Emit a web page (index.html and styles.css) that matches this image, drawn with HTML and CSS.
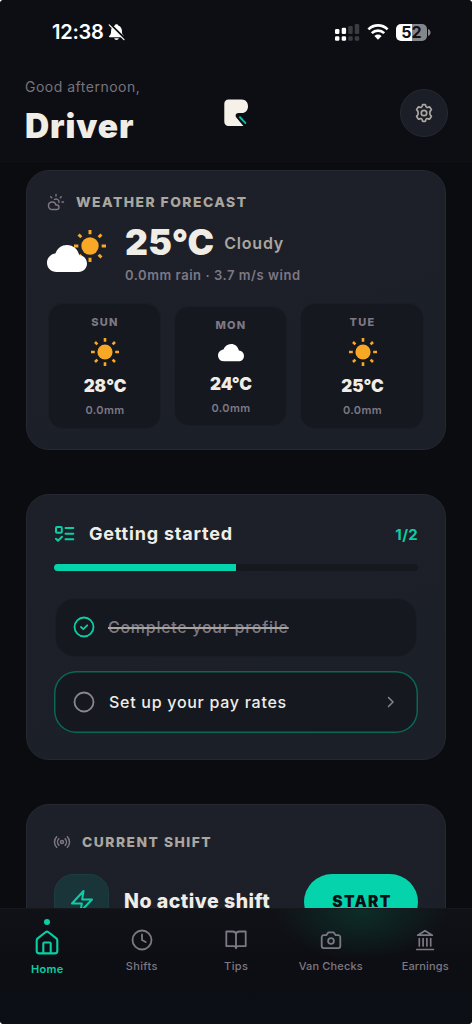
FILE: index.html
```html
<!DOCTYPE html>
<html lang="en">
<head>
<meta charset="utf-8">
<title>Home</title>
<link rel="stylesheet" href="styles.css">
</head>
<body>
<svg class="defs" width="0" height="0">
  <defs>
    <symbol id="sun" viewBox="0 0 28 28">
      <circle cx="14" cy="14" r="7.6" fill="#f9a825"/>
      <g stroke="#f9a825" stroke-width="2.6">
        <path d="M14 0v3.8M14 24.2V28M0 14h3.8M24.2 14H28M4 4l2.4 2.4M21.6 21.6L24 24M4 24l2.4-2.4M21.6 6.4L24 4"/>
      </g>
    </symbol>
    <symbol id="cloud" viewBox="0 0 40 27">
      <path d="M9.5 27C4 27 0 23 0 17.8 0 12.8 3.6 9.2 8.3 8.6 10.4 3.4 14.6 0 20 0c6.200 0 10.900 4.200 12.200 10.200C36.800 10.600 40 14 40 18.500 40 23.300 36.400 27 31.600 27z" fill="#fff"/>
    </symbol>
  </defs>
</svg>
<div class="screen">
  <div class="status">
    <span class="clock">12:38</span>
    <svg class="bell" width="18" height="18" viewBox="0 0 18 18">
      <path d="M8.500 1.200c.9 0 1.500.5 1.700 1.300 2.400.7 3.700 2.700 3.700 5.200 0 3 .6 3.900 1.700 5 .7.700.4 1.600-.6 1.600H2c-1 0-1.300-.9-.6-1.600 1.100-1.100 1.700-2 1.700-5 0-2.500 1.300-4.500 3.700-5.200.2-.8.8-1.300 1.700-1.300zM6.200 15.300h4.600c-.3 1-1.200 1.700-2.300 1.700s-2-.7-2.300-1.700z" fill="#fff"/>
      <path d="M2.300 1.200L17 15.900" stroke="#0d0e13" stroke-width="2.200"/>
      <path d="M1.200 1.900L16 16.700" stroke="#fff" stroke-width="1.200" stroke-linecap="round"/>
    </svg>
    <svg class="signal" width="25" height="17" viewBox="0 0 25 17">
      <g fill="#fff"><rect x="0" y="5" width="4.400" height="5" rx="1.300"/><rect x="6.700" y="3.700" width="4.400" height="6.300" rx="1.300"/><rect x="0" y="12.300" width="4.400" height="4.400" rx="1.300"/><rect x="6.700" y="12.300" width="4.400" height="4.400" rx="1.300"/></g>
      <g fill="#3b3c40"><rect x="13.300" y="2" width="4.400" height="8" rx="1.300"/><rect x="19.800" y="0" width="4.400" height="10" rx="1.300"/><rect x="13.300" y="12.300" width="4.400" height="4.400" rx="1.300"/><rect x="19.800" y="12.300" width="4.400" height="4.400" rx="1.300"/></g>
    </svg>
    <svg class="wifi" width="22" height="16" viewBox="0 0 22 16">
      <g fill="none" stroke="#fff" stroke-width="2.700"><path d="M1.400 5.400a13.700 13.700 0 0 1 19.200 0"/><path d="M4.800 9.100a8.900 8.900 0 0 1 12.400 0"/></g>
      <path d="M7.400 12a5.200 5.200 0 0 1 7.200 0L11 15.700z" fill="#fff"/>
    </svg>
    <div class="battery"><span>52</span></div>
    <svg class="nub" width="3" height="7" viewBox="0 0 3 7"><path d="M0 0c1.500.4 2.500 1.800 2.500 3.500S1.500 6.600 0 7z" fill="#85868a"/></svg>
  </div>
  <header class="header">
    <div class="greet">
      <div class="hello">Good afternoon,</div>
      <h1 class="name">Driver</h1>
    </div>
    <svg class="logo" width="25" height="28" viewBox="0 0 25 28">
      <path d="M4.500.5h13.300c3.700 0 6.200 2.800 6.200 6.700 0 4-2.500 6.800-6.200 6.800h-3.300c-1.800 0-2.900.9-2.900 2.400 0 .9.200 1.600.9 2.400l6.900 8.200H4.500C2 27 .3 25.300.3 22.800V4.700C.3 2.200 2 .5 4.500.5z" fill="#f5f1e9"/>
      <path d="M16 18.300l5.300 5.600" stroke="#12b8a2" stroke-width="2" stroke-linecap="round"/>
    </svg>
    <div class="settings">
      <svg width="20" height="20" viewBox="0 0 20 22" fill="none" stroke="#aaa69f" stroke-width="1.900" stroke-linejoin="round">
        <path d="M8.600 1.700h2.800c.5 1 .5 2.300 1.300 2.900.9.600 2.200-.2 3.500-.3l1.900 2.900c-.5 1.100-1.600 1.700-1.600 2.800v2c0 1.100 1.100 1.700 1.600 2.800l-1.900 2.900c-1.300-.1-2.600-.9-3.500-.3-.8.600-.8 1.900-1.300 2.900H8.600c-.5-1-.5-2.300-1.300-2.900-.9-.6-2.200.2-3.500.3l-1.900-2.900c.5-1.100 1.600-1.700 1.600-2.800v-2c0-1.100-1.100-1.700-1.600-2.800l1.900-2.900c1.300.1 2.600.9 3.500.3.8-.6.800-1.900 1.300-2.900z"/>
        <circle cx="10" cy="11" r="3"/>
      </svg>
    </div>
  </header>
  <main class="feed">
    <section class="card weather">
      <div class="eyebrow">
        <svg width="18" height="18" viewBox="0 0 24 24" fill="none" stroke="#7d7884" stroke-width="1.900" stroke-linecap="round" stroke-linejoin="round"><path d="M12 2v2M4.930 4.930l1.410 1.410M20 12h2M19.070 4.930l-1.410 1.410M15.947 12.650a4 4 0 0 0-5.925-4.128M13 22H7a5 5 0 1 1 4.900-6H13a3 3 0 0 1 0 6z"/></svg>
        <span>WEATHER FORECAST</span>
      </div>
      <div class="now">
        <svg class="now-art" width="60" height="44" viewBox="0 0 60 44">
          <use href="#sun" x="27" y="0" width="32" height="32"/>
          <use href="#cloud" x="0" y="15" width="40" height="27"/>
        </svg>
        <div>
          <div class="temp-row"><span class="temp">25°C</span><span class="sky">Cloudy</span></div>
          <div class="detail">0.0mm rain · 3.7 m/s wind</div>
        </div>
      </div>
      <div class="days">
        <div class="day"><span class="dow">SUN</span><svg width="28" height="28"><use href="#sun" width="28" height="28"/></svg><span class="deg">28°C</span><span class="mm">0.0mm</span></div>
        <div class="day short"><span class="dow">MON</span><svg width="26" height="28"><use href="#cloud" y="5" width="26" height="17.500"/></svg><span class="deg">24°C</span><span class="mm">0.0mm</span></div>
        <div class="day"><span class="dow">TUE</span><svg width="28" height="28"><use href="#sun" width="28" height="28"/></svg><span class="deg">25°C</span><span class="mm">0.0mm</span></div>
      </div>
    </section>

    <section class="card start">
      <div class="start-head">
        <svg width="22" height="20" viewBox="0 0 22 20" fill="none" stroke="#0acfa6" stroke-width="2" stroke-linecap="round" stroke-linejoin="round"><rect x="2" y="3" width="5.800" height="5.800" rx="1"/><path d="M2 14.700l2 2 4-4M11.500 4h7.800M11.500 9.700h7.800M11.500 15.300h7.800"/></svg>
        <h2>Getting started</h2>
        <span class="count">1/2</span>
      </div>
      <div class="track"><div class="fill"></div></div>
      <div class="task done">
        <svg width="22" height="22" viewBox="0 0 22 22" fill="none" stroke="#0acfa6" stroke-width="1.800" stroke-linecap="round" stroke-linejoin="round"><circle cx="11" cy="11" r="9.500"/><path d="M8 11l2.200 2.200L14.200 9.300"/></svg>
        <span>Complete your profile</span>
      </div>
      <div class="task next">
        <svg width="22" height="22" viewBox="0 0 22 22" fill="none" stroke="#8a8590" stroke-width="1.800"><circle cx="11" cy="11" r="9.500"/></svg>
        <span>Set up your pay rates</span>
        <svg class="chev" width="8" height="12" viewBox="0 0 8 12" fill="none" stroke="#8a8590" stroke-width="1.500" stroke-linecap="round" stroke-linejoin="round"><path d="M1.500 1.500L6 6l-4.500 4.500"/></svg>
      </div>
    </section>

    <section class="card shift">
      <div class="eyebrow wide">
        <svg width="18" height="18" viewBox="0 0 24 24" fill="none" stroke="#7d7884" stroke-width="2" stroke-linecap="round" stroke-linejoin="round"><path d="M4.900 19.100C1 15.200 1 8.800 4.900 4.900M7.800 16.200c-2.300-2.300-2.300-6.100 0-8.500M16.200 7.800c2.300 2.300 2.300 6.100 0 8.500M19.100 4.900C23 8.800 23 15.100 19.100 19"/><circle cx="12" cy="12" r="2"/></svg>
        <span>CURRENT SHIFT</span>
      </div>
      <div class="shift-row">
        <div class="bolt"><svg width="24" height="24" viewBox="0 0 24 24" fill="none" stroke="#0acfa6" stroke-width="2" stroke-linejoin="round"><path d="M13.500 1L2 13.500h9.800l-1.300 8L22 9.500h-9.800z"/></svg></div>
        <span class="no-shift">No active shift</span>
        <div class="go">START</div>
      </div>
    </section>
  </main>
  <nav class="tabs">
    <div class="tab on"><i></i>
      <svg width="24" height="26" viewBox="0 0 24 26" fill="none" stroke="#0acfa6" stroke-width="2.100" stroke-linejoin="round"><path d="M1.700 10.500c0-.9.300-1.500 1-2.100l7.800-6.200c1-.8 2-.8 3 0l7.800 6.200c.7.600 1 1.200 1 2.100V21c0 1.500-.9 2.400-2.400 2.400H4.100C2.600 23.400 1.700 22.500 1.700 21zM8.300 23.400V13.600c0-.7.400-1.100 1.100-1.100h5.200c.7 0 1.100.4 1.100 1.100v9.800"/></svg>
      <span>Home</span></div>
    <div class="tab">
      <svg width="24" height="24" viewBox="0 0 24 24" fill="none" stroke="#7d7884" stroke-width="1.800" stroke-linecap="round"><circle cx="12" cy="12" r="9.500"/><path d="M12 6.500V12l3.700 2"/></svg>
      <span>Shifts</span></div>
    <div class="tab">
      <svg width="24" height="24" viewBox="0 0 24 24" fill="none" stroke="#7d7884" stroke-width="1.800" stroke-linejoin="round"><path d="M12 6.500C12 4.500 10.600 3.500 8.500 3.500H2.300v14.600h7.200c1.500 0 2.500.8 2.500 2.200 0-1.400 1-2.200 2.500-2.200h7.200V3.500h-6.200C13.400 3.500 12 4.500 12 6.500zM12 6.500v14"/></svg>
      <span>Tips</span></div>
    <div class="tab">
      <svg width="24" height="24" viewBox="0 0 24 24" fill="none" stroke="#7d7884" stroke-width="1.800" stroke-linejoin="round"><path d="M14.600 4.300H9.400L7.300 7.200H4.700a2 2 0 0 0-2 2v8.900a2 2 0 0 0 2 2h14.600a2 2 0 0 0 2-2V9.200a2 2 0 0 0-2-2h-2.600z"/><circle cx="12" cy="13" r="2.900"/></svg>
      <span>Van Checks</span></div>
    <div class="tab">
      <svg width="24" height="24" viewBox="0 0 24 24" fill="none" stroke="#7d7884" stroke-width="1.700" stroke-linejoin="round" stroke-linecap="round"><path d="M4.700 7.200L12 2.700l7.300 4.500zM3.800 21.500h16.600M6.300 10.500v7.500M10.100 10.500v7.500M13.900 10.500v7.500M17.700 10.500v7.500"/></svg>
      <span>Earnings</span></div>
  </nav>
</div>
</body>
</html>
```
FILE: styles.css
```css
* { box-sizing: border-box; }
body { margin: 0; background: #fff; font-family: Inter, "Liberation Sans", sans-serif; }
svg { display: block; flex: none; }
.defs { position: absolute; }
.screen { width: 472px; height: 1024px; overflow: hidden; background: #0b0c10; border-radius: 4px; position: relative; display: flex; flex-direction: column; }

.status { height: 64px; flex: none; padding: 0 41px 0 52px; display: flex; align-items: center; background: #0d0e13; }
.clock { font-size: 20px; font-weight: 600; color: #fff; letter-spacing: -0.25px; width: 56px; white-space: nowrap; }
.signal { margin-left: auto; }
.wifi { margin: 0 7px 0 7px; }
.battery { width: 31px; height: 17px; border-radius: 5px; background: linear-gradient(90deg, #fff 52%, #85868a 52%); text-align: center; font-size: 16px; line-height: 17px; font-weight: 700; color: #111217; }
.nub { margin-left: 1px; }

.header { height: 98px; flex: none; display: flex; background: #0d0e13; border-bottom: 1px solid #101116; padding: 13px 24px 0 25px; justify-content: space-between; }
.greet { width: 199px; }
.hello { font-size: 14px; line-height: 20px; letter-spacing: 0.5px; color: #77737c; }
.name { margin: 7px 0 0; font-size: 33.500px; line-height: 44px; font-weight: 900; letter-spacing: 0.9px; color: #f0ede6; }
.logo { margin-top: 22px; }
.settings { width: 48px; height: 48px; border-radius: 50%; background: #1b1e27; border: 1px solid #262932; margin: 12px 0 0 151px; display: flex; align-items: center; justify-content: center; }

.feed { padding: 8px 26px 0; display: flex; flex-direction: column; gap: 44px; }
.card { background: linear-gradient(160deg, #1d2029, #1b1f28); border: 1px solid #262932; border-radius: 23px; flex: none; }
.eyebrow { display: flex; align-items: center; gap: 11px; height: 20px; font-size: 13.800px; font-weight: 800; letter-spacing: 1.500px; color: #aaa69f; }
.weather { height: 280px; padding: 21px 21px 0; }
.eyebrow svg { margin-left: -1px; }
.now { display: flex; padding-top: 15px; height: 91px; }
.now-art { margin: 3px 18px 0 -1px; }
.temp-row { display: flex; align-items: center; height: 30px; gap: 10px; }
.temp { font-size: 35.500px; font-weight: 900; color: #f0ede6; letter-spacing: 0.200px; }
.sky { font-size: 16px; font-weight: 600; color: #aaa69f; letter-spacing: 0.8px; padding-top: 1px; }
.detail { font-size: 13px; line-height: 18px; font-weight: 600; letter-spacing: 0.55px; color: #7d7884; margin-top: 9px; }
.days { display: grid; grid-template-columns: 113px 113px 124px; gap: 13px; align-items: center; }
.day { height: 126px; background: #15181f; border: 1px solid #1a1d25; border-radius: 15px; display: flex; flex-direction: column; align-items: center; padding: 9px 0 0 1px; white-space: nowrap; }
.short { height: 120px; padding-top: 9px; }
.day svg { margin-top: 7px; }
.short svg { margin-top: 5px; }
.dow { font-size: 11px; line-height: 18px; font-weight: 800; letter-spacing: 1.200px; color: #7d7884; }
.deg { font-size: 17px; line-height: 22px; font-weight: 900; color: #f0ede6; margin-top: 9px; }
.short .deg { margin-top: 6px; }
.mm { font-size: 11px; line-height: 16px; font-weight: 600; letter-spacing: 0.400px; color: #7d7884; margin-top: 5px; }

.start { height: 266px; padding: 25px 27px 0; }
.start-head { display: flex; align-items: center; height: 28px; }
.start-head h2 { margin: 0 0 0 13px; font-size: 18px; line-height: 24px; font-weight: 700; letter-spacing: 0.800px; color: #f0ede6; }
.count { margin-left: auto; font-size: 15px; font-weight: 700; color: #0acfa6; letter-spacing: 0.300px; }
.track { height: 7px; border-radius: 4px; background: #15181f; margin-top: 16px; overflow: hidden; }
.fill { width: 50%; height: 7px; background: #05d3ab; }
.task { display: flex; align-items: center; font-size: 16px; font-weight: 500; letter-spacing: 0.720px; background: #15181f; gap: 14px; }
.done { height: 59px; margin: 27px 1px 0; border: 1px solid #1a1d25; border-radius: 20px; padding: 0 17px 1px; gap: 13px; color: #7d7884; }
.done span { text-decoration: line-through; text-decoration-color: #aaa69f; text-decoration-thickness: 1.500px; }
.next { height: 62px; margin-top: 14px; box-shadow: inset 0 0 0 1.500px #0c6656; border-radius: 22px; padding: 0 23px 1px 19px; color: #f0ede6; }
.chev { margin-left: auto; }

.shift { height: 260px; padding: 27px 27px 0; }
.shift-row { display: flex; align-items: center; margin-top: 22px; }
.bolt { width: 55px; height: 56px; border-radius: 19px; background: #1a3539; border: 1px solid #1c3d3f; display: flex; align-items: center; justify-content: center; }
.no-shift { margin-left: 15px; font-size: 19.500px; line-height: 26px; font-weight: 800; letter-spacing: 0.500px; color: #f0ede6; white-space: nowrap; margin-top: -2px; }
.go { margin-left: auto; width: 114px; height: 56px; border-radius: 28px; background: #05d3ab; color: #0d0e13; font-size: 15.500px; font-weight: 900; letter-spacing: 1.300px; line-height: 56px; text-align: center; text-indent: 2px; }

.tabs { position: absolute; left: 0; top: 908px; width: 472px; height: 116px; display: grid; grid-template-columns: repeat(5, 94.500px); background: radial-gradient(ellipse 85px 48px at 361px 2px, rgba(12, 46, 41, 0.950), rgba(12, 46, 41, 0)), linear-gradient(#111217, #0d0e13 45%, #0c0f17); border-top: 1px solid #16181d; }
.tab { display: flex; flex-direction: column; align-items: center; padding-top: 19px; font-size: 11px; line-height: 16px; font-weight: 500; letter-spacing: 0.150px; color: #7d7884; white-space: nowrap; }
.tab:nth-child(2), .tab:nth-child(3) { letter-spacing: 0.400px; }
.tab span { margin-top: 6px; }
.on { padding-top: 10px; color: #0acfa6; font-weight: 600; letter-spacing: 0.300px; }
.on i { width: 6px; height: 6px; border-radius: 50%; background: #0acfa6; margin-bottom: 5px; }
.on span { margin-top: 5px; }
```
